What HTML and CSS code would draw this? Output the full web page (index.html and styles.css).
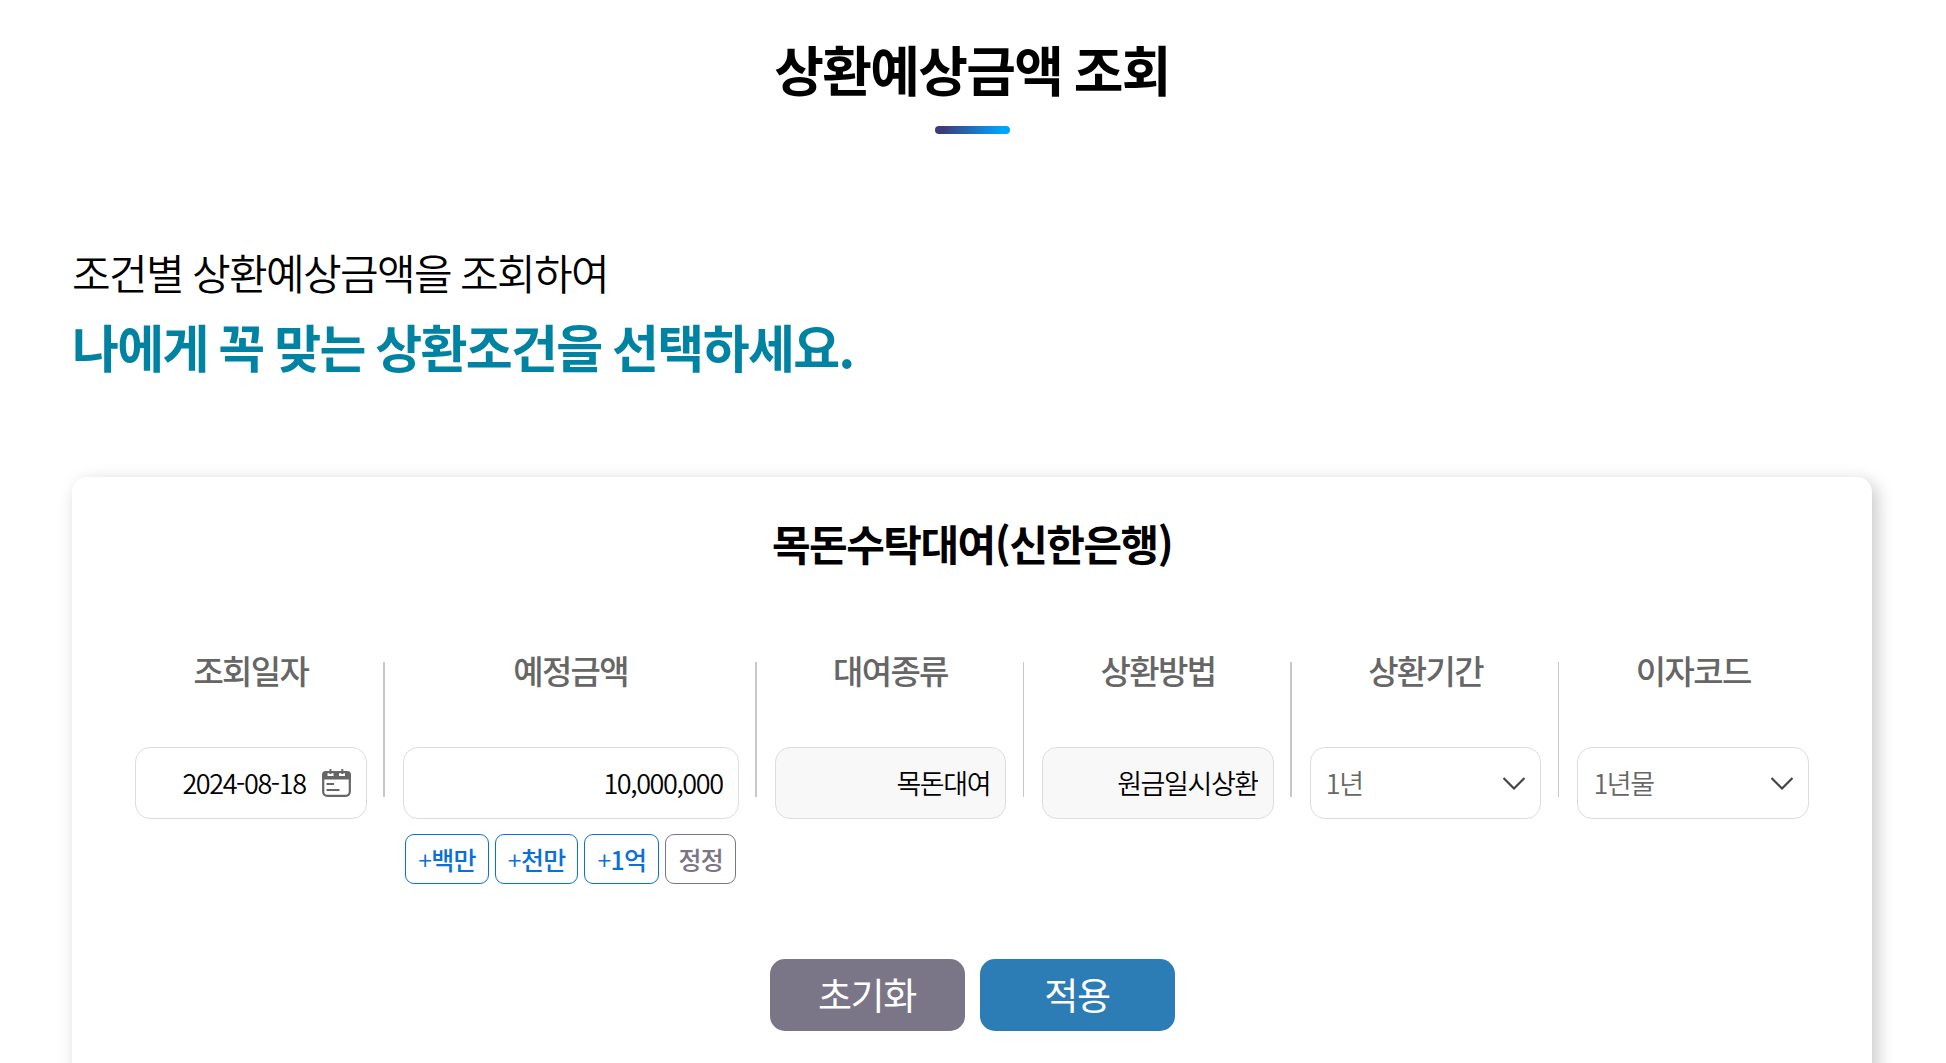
FILE: index.html
```
<!DOCTYPE html>
<html lang="ko">
<head>
    <meta charset="UTF-8">
    <title>상환예상금액 조회</title>
    <link rel="stylesheet" href="styles.css">
</head>
<body>
    <h1>상환예상금액 조회</h1>
    <div class="title-bar"></div>

    <main>
        <div class="intro">
            <p>조건별 상환예상금액을 조회하여</p>
            <strong>나에게 꼭 맞는 상환조건을 선택하세요.</strong>
        </div>

        <form class="card">
            <h2>목돈수탁대여(신한은행)</h2>
            <div class="fields">
                <div class="field wide-line">
                    <label for="date">조회일자</label>
                    <div class="box">
                        <input type="text" id="date" value="2024-08-18">
                        <svg class="calendar" width="29" height="28" viewBox="0 0 29 28">
                            <rect x="1.2" y="3.200" width="26.600" height="23.6" rx="4" fill="none" stroke="#666" stroke-width="2.2"/>
                            <path d="M0 10.500V6q0-4 4-4h1.500v5h6V2H17v5h6V2h2q4 0 4 4v4.500z" fill="#666"/>
                            <path d="M8.500 0v5M20.300 0v5" stroke="#666" stroke-width="2"/>
                            <path d="M4.500 15h7.500M4.500 21h13" stroke="#666" stroke-width="2.2"/>
                        </svg>
                    </div>
                </div>
                <div class="field amount wide-line">
                    <label for="amount">예정금액</label>
                    <div class="box">
                        <input type="text" id="amount" value="10,000,000">
                    </div>
                    <div class="add-buttons">
                        <button type="button"><span>+</span>백만</button>
                        <button type="button"><span>+</span>천만</button>
                        <button type="button"><span>+</span>1억</button>
                        <button type="button" class="clear">정정</button>
                    </div>
                </div>
                <div class="field">
                    <label for="kind">대여종류</label>
                    <div class="box readonly">
                        <input type="text" id="kind" value="목돈대여" readonly>
                    </div>
                </div>
                <div class="field wide-line">
                    <label for="method">상환방법</label>
                    <div class="box readonly">
                        <input type="text" id="method" value="원금일시상환" readonly>
                    </div>
                </div>
                <div class="field">
                    <label for="period">상환기간</label>
                    <div class="box">
                        <select id="period"><option>1년</option></select>
                        <svg class="arrow" width="22" height="13" viewBox="0 0 22 13"><path d="M.5 1L11 11.500 21.500 1"/></svg>
                    </div>
                </div>
                <div class="field">
                    <label for="code">이자코드</label>
                    <div class="box">
                        <select id="code"><option>1년물</option></select>
                        <svg class="arrow" width="22" height="13" viewBox="0 0 22 13"><path d="M.5 1L11 11.500 21.500 1"/></svg>
                    </div>
                </div>
            </div>
            <div class="actions">
                <button type="reset">초기화</button>
                <button type="button" class="apply">적용</button>
            </div>
        </form>
    </main>
</body>
</html>
```
FILE: styles.css
```
* {
    box-sizing: border-box;
}
html {
    overflow: hidden;
}
body {
    width: 1944px;
    height: 1063px;
    margin: 0;
    padding-top: 30px;
    overflow: hidden;
    background: #fff;
    color: #000;
    font-family: "Noto Sans CJK KR", "Noto Sans", sans-serif;
    letter-spacing: -1.65px;
}
h1 {
    margin: 0;
    text-align: center;
    font-size: 54px;
    font-weight: 700;
    line-height: 78px;
    word-spacing: -2px;
}
.title-bar {
    width: 75px;
    height: 8px;
    margin: 18px auto 0;
    border-radius: 4px;
    background: linear-gradient(to right, #3c3c78 10%, #00a5ff 90%);
}
main {
    width: 1800px;
    margin: 100px auto 0 72px;
}
.intro p {
    margin: 0;
    font-size: 42px;
    font-weight: 350;
    line-height: 75px;
    word-spacing: -1px;
}
.intro strong {
    display: block;
    color: #0083a3;
    font-size: 51px;
    line-height: 75px;
    word-spacing: -2.1px;
}
.card {
    height: 700px;
    margin-top: 93px;
    padding: 28px 45px;
    border-radius: 15px;
    background: #fff;
    box-shadow: 5px 5px 18px rgba(0, 0, 0, 0.22);
}
h2 {
    margin: 0;
    text-align: center;
    font-size: 42px;
    font-weight: 700;
    line-height: 76px;
    letter-spacing: -1.5px;
}
.fields {
    display: flex;
    height: 302px;
    margin-top: 66px;
}
.field {
    flex: 0 0 267.6px;
    padding: 0 18px;
    background: linear-gradient(#c8c8c8, #c8c8c8) no-repeat 100% 15px / 1px 135px;
}
.field.wide-line {
    background-size: 2px 135px;
}
.field.amount {
    flex-basis: 372px;
}
.field:last-child {
    background: none;
}
label {
    display: block;
    height: 100px;
    text-align: center;
    color: #666;
    font-size: 33px;
    font-weight: 500;
    line-height: 46px;
}
.box {
    display: flex;
    align-items: center;
    height: 72px;
    padding: 0 15px;
    border: 1px solid #ddd;
    border-radius: 15px;
    background: #fff;
}
.box.readonly {
    background: #f8f8f8;
}
.box input, .box select {
    flex: 1;
    width: 0;
    height: 70px;
    padding: 0 0 2px;
    border: 0;
    outline: 0;
    background: none;
    color: #000;
    font: 350 27px "Noto Sans CJK KR", sans-serif;
    letter-spacing: -1.4px;
    text-align: right;
}
.box select {
    appearance: none;
    color: #666;
    text-align: left;
}
.calendar {
    margin-left: 16px;
}
.arrow {
    fill: none;
    stroke: #444;
    stroke-width: 2.2;
}
.add-buttons {
    display: flex;
    justify-content: center;
    gap: 6px;
    margin-top: 15px;
}
button {
    font-family: "Noto Sans CJK KR", sans-serif;
    cursor: pointer;
}
.add-buttons button {
    height: 50px;
    padding: 0 12px 1px;
    border: 1px solid #0a70d9;
    border-radius: 9px;
    background: #fff;
    color: #0a70d9;
    font-size: 25px;
    font-weight: 500;
    letter-spacing: -0.7px;
}
.add-buttons span {
    font-weight: 350;
}
.add-buttons .clear {
    border-color: #7a7687;
    color: #7a7687;
}
.actions {
    display: flex;
    justify-content: center;
    gap: 15px;
    margin-top: 10px;
}
.actions button {
    width: 195px;
    height: 72px;
    padding: 0 0 3px;
    border: 0;
    border-radius: 15px;
    background: #7a7687;
    color: #fff;
    font-size: 37px;
    letter-spacing: -1.3px;
}
.actions .apply {
    background: #2c7db5;
}
```
